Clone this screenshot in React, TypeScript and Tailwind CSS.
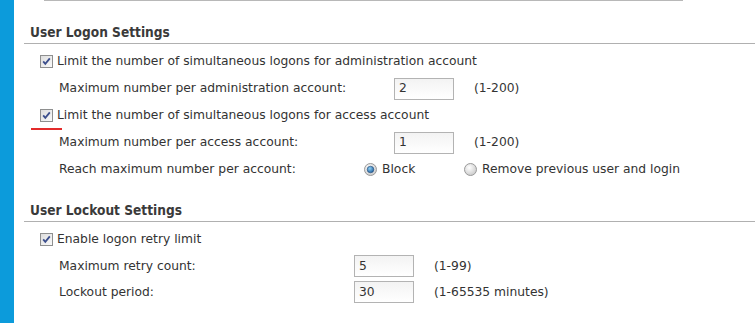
import React from "react";

const font = { fontFamily: '"DejaVu Sans", Verdana, sans-serif' };
const headFont = { fontFamily: '"DejaVu Sans Condensed", "DejaVu Sans", sans-serif' };

function Check() {
  return (
    <svg width="13" height="13" viewBox="0 0 13 13" className="shrink-0">
      <defs>
        <linearGradient id="cbg" x1="0" y1="0" x2="1" y2="1">
          <stop offset="0" stopColor="#dcdcdc" />
          <stop offset="1" stopColor="#fbfbfb" />
        </linearGradient>
      </defs>
      <rect x="0.5" y="0.5" width="12" height="12" fill="url(#cbg)" stroke="#8e8f8f" />
      <path d="M3.2 6.4 L5.3 8.8 L9.8 3.4" fill="none" stroke="#3b4e8c" strokeWidth="1.8" />
    </svg>
  );
}

function Radio({ on }: { on?: boolean }) {
  return (
    <svg width="13" height="13" viewBox="0 0 13 13" className="shrink-0">
      <defs>
        <radialGradient id="rg" cx="0.4" cy="0.35" r="0.7">
          <stop offset="0" stopColor="#ffffff" />
          <stop offset="1" stopColor="#c8c8c8" />
        </radialGradient>
        <radialGradient id="rb" cx="0.4" cy="0.35" r="0.7">
          <stop offset="0" stopColor="#8fd0f4" />
          <stop offset="1" stopColor="#1c5c9a" />
        </radialGradient>
      </defs>
      <circle cx="6.5" cy="6.5" r="6" fill="url(#rg)" stroke="#9a9a9a" />
      {on && <circle cx="6.5" cy="6.5" r="3.3" fill="url(#rb)" stroke="#274c78" strokeWidth="0.6" />}
    </svg>
  );
}

function Input({ value }: { value: string }) {
  return (
    <div className="w-[60px] h-[22px] border border-[#b3b3b3] bg-gradient-to-b from-[#f3f3f3] to-white flex items-center pl-[4px] text-[#333] shrink-0">
      {value}
    </div>
  );
}

function Heading({ children }: { children: React.ReactNode }) {
  return (
    <div
      className="ml-[10px] h-[22px] border-b border-[#b0b0b0] flex items-center pl-[6px] font-bold text-[13.6px] text-[#3a3a3a]"
      style={headFont}
    >
      {children}
    </div>
  );
}

function CheckRow({ label, h, mark }: { label: string; h: string; mark?: boolean }) {
  return (
    <div className={`relative flex items-center gap-[4px] pl-[26px] ${h}`}>
      <Check />
      <span>{label}</span>
      {mark && <div className="absolute left-[17px] bottom-[-1px] w-[31px] h-[2px] bg-[#e32b2b]" />}
    </div>
  );
}

function FieldRow({
  label,
  labelW,
  value,
  range,
  h,
}: {
  label: string;
  labelW: string;
  value: string;
  range: string;
  h: string;
}) {
  return (
    <div className={`flex items-center pl-[45px] ${h}`}>
      <span className={`${labelW} shrink-0`}>{label}</span>
      <Input value={value} />
      <span className="ml-[20px]">{range}</span>
    </div>
  );
}

export default function App() {
  return (
    <div className="flex w-[755px] h-[323px] overflow-hidden bg-white text-[12.3px] text-[#333]" style={font}>
      <div className="w-[14px] shrink-0 bg-[#0c9bdb]" />
      <div className="flex-1 flex flex-col">
        <div className="ml-[30px] w-[639px] h-px bg-[#b8b8b8]" />
        <div className="mt-[21px]">
          <Heading>User Logon Settings</Heading>
        </div>
        <div className="pt-[4px]">
          <CheckRow h="h-[27px]" label="Limit the number of simultaneous logons for administration account" />
          <FieldRow h="h-[27px]" labelW="w-[335px]" label="Maximum number per administration account:" value="2" range="(1-200)" />
          <CheckRow h="h-[27px]" mark label="Limit the number of simultaneous logons for access account" />
          <FieldRow h="h-[27px]" labelW="w-[335px]" label="Maximum number per access account:" value="1" range="(1-200)" />
          <div className="flex items-center pl-[45px] h-[27px]">
            <span className="w-[305px] shrink-0">Reach maximum number per account:</span>
            <div className="flex items-center gap-[5px] w-[100px]">
              <Radio on />
              <span>Block</span>
            </div>
            <div className="flex items-center gap-[5px]">
              <Radio />
              <span>Remove previous user and login</span>
            </div>
          </div>
        </div>
        <div className="mt-[17px]">
          <Heading>User Lockout Settings</Heading>
        </div>
        <div className="pt-[4px]">
          <CheckRow h="h-[26.5px]" label="Enable logon retry limit" />
          <FieldRow h="h-[26.5px]" labelW="w-[295px]" label="Maximum retry count:" value="5" range="(1-99)" />
          <FieldRow h="h-[26.5px]" labelW="w-[295px]" label="Lockout period:" value="30" range="(1-65535 minutes)" />
        </div>
      </div>
    </div>
  );
}
